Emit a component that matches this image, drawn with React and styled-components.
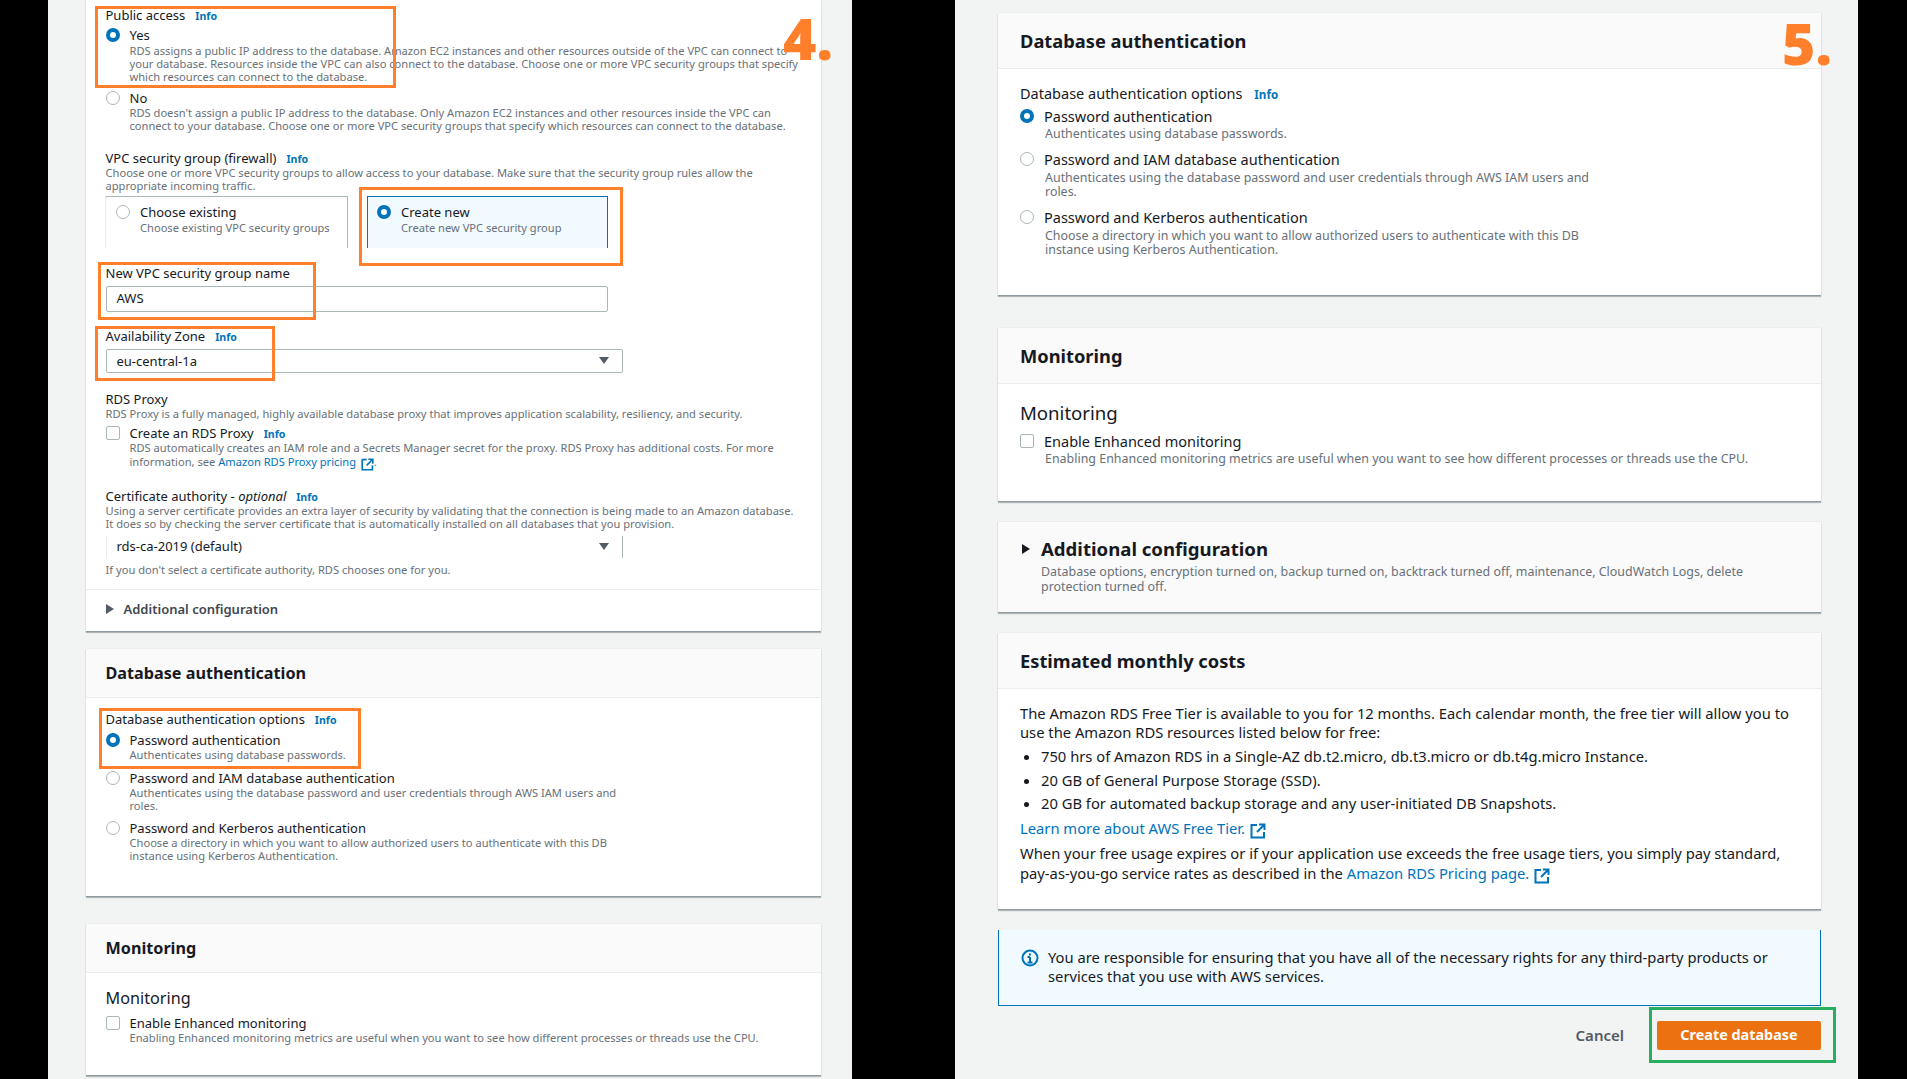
import styled, { createGlobalStyle } from "styled-components";

const GlobalStyle = createGlobalStyle`
  html, body {
    margin: 0;
    background: #000;
  }
  * {
    box-sizing: border-box;
  }
`;

const Page = styled.div`
  display: flex;
  gap: 103px;
  height: 1079px;
  width: 1907px;
  padding-left: 48px;
  overflow: hidden;
  background: #000;
  font-family: "Noto Sans", sans-serif;
  color: #16191f;
`;

const Panel = styled.section`
  position: relative;
  flex: none;
  width: ${(p) => (p.$small ? "804px" : "903px")};
  height: 1079px;
  overflow: hidden;
  background: #f2f3f3;
  padding: ${(p) => (p.$small ? "0 31px 0 38px" : "13px 37px 0 43px")};

  --label: ${(p) => (p.$small ? "13px" : "14.5px")};
  --desc: ${(p) => (p.$small ? "11.13px" : "12.45px")};
  --info: ${(p) => (p.$small ? "10.6px" : "11.6px")};
  --info-gap: ${(p) => (p.$small ? "10px" : "12px")};
  --title: ${(p) => (p.$small ? "16.2px" : "18.3px")};
  --sub: ${(p) => (p.$small ? "16.2px" : "18.6px")};
  --pad: ${(p) => (p.$small ? "19.5px" : "22px")};
  --row: ${(p) => (p.$small ? "16px" : "18px")};
`;

const Card = styled.div`
  background: #fff;
  margin-top: ${(p) => p.$mt || 0}px;
  height: ${(p) => p.$h}px;
  border-bottom: 1px solid #8d9a9f;
  box-shadow: 0 1px 1px rgba(0, 28, 36, 0.25), 0 0 1px rgba(0, 28, 36, 0.15);
`;

const CardHeader = styled.header`
  display: flex;
  align-items: center;
  height: ${(p) => p.$h}px;
  padding: 0 var(--pad) 1px;
  background: #fafafa;
  border-bottom: 1px solid #eaeded;
`;

const CardTitle = styled.h2`
  margin: 0;
  font-size: var(--title);
  font-weight: 700;
  color: #16191f;
`;

const CardBody = styled.div`
  padding: ${(p) => p.$pt || 0}px var(--pad) 0;
`;

const SubTitle = styled.h3`
  margin: 0;
  font-size: var(--sub);
  font-weight: 400;
  line-height: 24px;
`;

const FieldLabel = styled.div`
  margin-top: ${(p) => p.$mt || 0}px;
  font-size: var(--label);
  line-height: var(--row);
  white-space: nowrap;

  em {
    font-style: italic;
  }
`;

const InfoLink = styled.a`
  margin-left: var(--info-gap);
  font-size: var(--info);
  font-weight: 700;
  line-height: 1;
  color: #0073bb;
`;

const Description = styled.p`
  margin: ${(p) => p.$mt || 0}px 0 0 ${(p) => p.$ml || 0}px;
  font-size: var(--desc);
  line-height: ${(p) => p.$lh || 13}px;
  color: #687078;
  white-space: nowrap;
`;

const OptionRow = styled.div`
  display: flex;
  align-items: center;
  gap: 10px;
  margin-top: ${(p) => p.$mt || 0}px;
  font-size: var(--label);
  line-height: var(--row);
  white-space: nowrap;
`;

const Indented = styled.div`
  margin-left: ${(p) => p.$ml || 24}px;
`;

const Radio = styled.span`
  flex: none;
  width: 14px;
  height: 14px;
  border-radius: 50%;
  background: #fff;
  border: ${(p) => (p.$on ? "4px solid #0073bb" : "1px solid #aab7b8")};
`;

const Checkbox = styled.span`
  flex: none;
  width: 14px;
  height: 14px;
  border-radius: 2px;
  background: #fff;
  border: 1px solid #aab7b8;
`;

const Tiles = styled.div`
  display: flex;
  gap: 19px;
  margin: 4px 0 0 -0.5px;
`;

const Tile = styled.div`
  width: ${(p) => p.$w}px;
  height: 52px;
  padding: 7px 0 0 ${(p) => p.$pl}px;
  background: ${(p) => (p.$on ? "#f1faff" : "#fff")};
  border: 1px solid ${(p) => (p.$on ? "#0073bb" : "#aab7b8")};
  border-bottom: none;
  border-left-color: ${(p) => (p.$on ? "#0073bb" : "#eaeded")};
`;

const TextInput = styled.div`
  display: flex;
  align-items: center;
  width: 502px;
  height: 26px;
  margin-top: 5px;
  padding: 0 0 2px 10px;
  font-size: var(--label);
  background: #fff;
  border: 1px solid #aab7b8;
  border-radius: 2px;
`;

const SelectBox = styled.div`
  display: flex;
  align-items: center;
  justify-content: space-between;
  width: 517px;
  height: 24px;
  margin-top: ${(p) => p.$mt || 5}px;
  padding: 0 13px 1px 10px;
  font-size: var(--label);
  background: #fff;
  border: 1px solid #aab7b8;
  border-radius: 2px;
  ${(p) => p.$open && "border-top-color: #fff; border-left-color: #eaeded; border-bottom-color: #fff;"}
`;

const Caret = styled.span`
  width: 0;
  height: 0;
  border-left: 5px solid transparent;
  border-right: 5px solid transparent;
  border-top: 7px solid #545b64;
`;

const Divider = styled.hr`
  margin: ${(p) => p.$mt}px calc(var(--pad) * -1) 0;
  border: none;
  border-top: 1px solid #eaeded;
`;

const Expander = styled.div`
  display: flex;
  align-items: center;
  gap: 10px;
  margin-top: 11px;
  font-size: var(--label);
  font-weight: 600;
  line-height: 16px;
  color: #414750;
`;

const Triangle = styled.span`
  flex: none;
  width: 0;
  height: 0;
  border-top: 5.5px solid transparent;
  border-bottom: 5.5px solid transparent;
  border-left: 8px solid ${(p) => p.$color || "#545b64"};
`;

const ExpanderCard = styled(Card)`
  background: #fafafa;
  padding: 16px var(--pad) 0;
`;

const ExpanderTitle = styled.div`
  display: flex;
  align-items: center;
  gap: 11px;
  margin-left: 2px;
  font-size: var(--sub);
  font-weight: 700;
  line-height: 22px;
`;

const Copy = styled.p`
  margin: ${(p) => p.$mt || 0}px 0 0;
  font-size: 14.75px;
  line-height: ${(p) => p.$lh || 19}px;
  white-space: nowrap;
`;

const Bullets = styled.ul`
  margin: 5px 0 0;
  padding: 0 0 0 21px;
  font-size: 14.75px;
  line-height: 19px;

  li {
    margin-bottom: 4.5px;
  }
`;

const ExternalLink = styled.a`
  color: #0073bb;
`;

const LinkIcon = styled.svg`
  width: ${(p) => p.$size}px;
  height: ${(p) => p.$size}px;
  margin: -3px 0 -3px 5px;
  vertical-align: -2px;
`;

const Alert = styled.div`
  display: flex;
  gap: 9px;
  height: 76px;
  margin-top: 20px;
  padding: 18px 22px 0;
  background: #f1faff;
  border: 1px solid #0073bb;
  border-top: none;
`;

const AlertIcon = styled.svg`
  flex: none;
  width: 18px;
  height: 18px;
  margin-top: 1px;
`;

const Actions = styled.div`
  display: flex;
  justify-content: flex-end;
  align-items: center;
  gap: 33px;
  margin-top: 15px;
`;

const CancelButton = styled.span`
  padding-bottom: 2px;
  font-size: 15px;
  font-weight: 600;
  color: #545b64;
`;

const PrimaryButton = styled.span`
  display: flex;
  align-items: center;
  justify-content: center;
  width: 164px;
  height: 29px;
  padding-bottom: 2px;
  font-size: 14.4px;
  font-weight: 700;
  color: #fff;
  background: #ec7211;
  border-radius: 2px;
`;

const Highlight = styled.div`
  position: absolute;
  left: ${(p) => p.$x}px;
  top: ${(p) => p.$y}px;
  width: ${(p) => p.$w}px;
  height: ${(p) => p.$h}px;
  border: 3px solid ${(p) => p.$color || "#ff7f2a"};
  pointer-events: none;
`;

const StepNumber = styled.div`
  position: absolute;
  left: ${(p) => p.$x}px;
  top: ${(p) => p.$y}px;
  font-family: "Open Sans", sans-serif;
  font-size: 57px;
  font-weight: 800;
  line-height: 60px;
  color: #ff7f2a;
`;

function External({ size = 12 }) {
  return (
    <LinkIcon $size={size} viewBox="0 0 16 16" fill="none" stroke="#0073bb" strokeWidth="2">
      <path d="M7 2H1.5v12.5H14V9" />
      <path d="M9 1.5h5.5V7M14.5 1.5 7 9" />
    </LinkIcon>
  );
}

function LeftPanel() {
  return (
    <Panel $small>
      <Card $h={632}>
        <CardBody $pt={7}>
          <FieldLabel>
            Public access<InfoLink>Info</InfoLink>
          </FieldLabel>
          <OptionRow $mt={4}>
            <Radio $on />
            Yes
          </OptionRow>
          <Indented>
            <Description $mt={0.5} $lh={13}>
              RDS assigns a public IP address to the database. Amazon EC2 instances and other resources outside of the VPC can connect to
              <br />
              your database. Resources inside the VPC can also connect to the database. Choose one or more VPC security groups that specify
              <br />
              which resources can connect to the database.
            </Description>
          </Indented>
          <OptionRow $mt={7.5}>
            <Radio />
            No
          </OptionRow>
          <Indented>
            <Description>
              RDS doesn't assign a public IP address to the database. Only Amazon EC2 instances and other resources inside the VPC can
              <br />
              connect to your database. Choose one or more VPC security groups that specify which resources can connect to the database.
            </Description>
          </Indented>
          <FieldLabel $mt={18}>
            VPC security group (firewall)<InfoLink>Info</InfoLink>
          </FieldLabel>
          <Description $mt={1} $lh={12.5}>
            Choose one or more VPC security groups to allow access to your database. Make sure that the security group rules allow the
            <br />
            appropriate incoming traffic.
          </Description>
          <Tiles>
            <Tile $w={243} $pl={10}>
              <OptionRow>
                <Radio />
                Choose existing
              </OptionRow>
              <Description $mt={1} $ml={24}>
                Choose existing VPC security groups
              </Description>
            </Tile>
            <Tile $on $w={241} $pl={9}>
              <OptionRow>
                <Radio $on />
                Create new
              </OptionRow>
              <Description $mt={1} $ml={24}>
                Create new VPC security group
              </Description>
            </Tile>
          </Tiles>
          <FieldLabel $mt={17}>New VPC security group name</FieldLabel>
          <TextInput>AWS</TextInput>
          <FieldLabel $mt={16}>
            Availability Zone<InfoLink>Info</InfoLink>
          </FieldLabel>
          <SelectBox>
            eu-central-1a
            <Caret />
          </SelectBox>
          <FieldLabel $mt={18}>RDS Proxy</FieldLabel>
          <Description $mt={1} $lh={12.5}>
            RDS Proxy is a fully managed, highly available database proxy that improves application scalability, resiliency, and security.
          </Description>
          <OptionRow $mt={4.5}>
            <Checkbox />
            <span>
              Create an RDS Proxy<InfoLink>Info</InfoLink>
            </span>
          </OptionRow>
          <Indented>
            <Description $lh={13.5}>
              RDS automatically creates an IAM role and a Secrets Manager secret for the proxy. RDS Proxy has additional costs. For more
              <br />
              information, see <ExternalLink>Amazon RDS Proxy pricing</ExternalLink>
              <External size={13} />.
            </Description>
          </Indented>
          <FieldLabel $mt={19.5}>
            Certificate authority - <em>optional</em>
            <InfoLink>Info</InfoLink>
          </FieldLabel>
          <Description>
            Using a server certificate provides an extra layer of security by validating that the connection is being made to an Amazon database.
            <br />
            It does so by checking the server certificate that is automatically installed on all databases that you provision.
          </Description>
          <SelectBox $open $mt={5}>
            rds-ca-2019 (default)
            <Caret />
          </SelectBox>
          <Description $mt={4.5}>If you don't select a certificate authority, RDS chooses one for you.</Description>
          <Divider $mt={12.5} />
          <Expander>
            <Triangle />
            Additional configuration
          </Expander>
        </CardBody>
      </Card>

      <Card $mt={17} $h={248}>
        <CardHeader $h={49}>
          <CardTitle>Database authentication</CardTitle>
        </CardHeader>
        <CardBody $pt={13}>
          <FieldLabel>
            Database authentication options<InfoLink>Info</InfoLink>
          </FieldLabel>
          <OptionRow $mt={5}>
            <Radio $on />
            Password authentication
          </OptionRow>
          <Indented>
            <Description>Authenticates using database passwords.</Description>
          </Indented>
          <OptionRow $mt={8.5}>
            <Radio />
            Password and IAM database authentication
          </OptionRow>
          <Indented>
            <Description>
              Authenticates using the database password and user credentials through AWS IAM users and
              <br />
              roles.
            </Description>
          </Indented>
          <OptionRow $mt={8.5}>
            <Radio />
            Password and Kerberos authentication
          </OptionRow>
          <Indented>
            <Description>
              Choose a directory in which you want to allow authorized users to authenticate with this DB
              <br />
              instance using Kerberos Authentication.
            </Description>
          </Indented>
        </CardBody>
      </Card>

      <Card $mt={27} $h={152}>
        <CardHeader $h={49}>
          <CardTitle>Monitoring</CardTitle>
        </CardHeader>
        <CardBody $pt={13}>
          <SubTitle>Monitoring</SubTitle>
          <OptionRow $mt={5}>
            <Checkbox />
            Enable Enhanced monitoring
          </OptionRow>
          <Indented>
            <Description>Enabling Enhanced monitoring metrics are useful when you want to see how different processes or threads use the CPU.</Description>
          </Indented>
        </CardBody>
      </Card>

      <Highlight $x={47} $y={6} $w={301} $h={82} />
      <Highlight $x={311} $y={187} $w={264} $h={79} />
      <Highlight $x={50} $y={262} $w={218} $h={58} />
      <Highlight $x={47} $y={326} $w={180} $h={55} />
      <Highlight $x={51} $y={708} $w={262} $h={61} />
      <StepNumber $x={735} $y={8}>4.</StepNumber>
    </Panel>
  );
}

function RightPanel() {
  return (
    <Panel>
      <Card $h={283}>
        <CardHeader $h={56}>
          <CardTitle>Database authentication</CardTitle>
        </CardHeader>
        <CardBody $pt={15}>
          <FieldLabel>
            Database authentication options<InfoLink>Info</InfoLink>
          </FieldLabel>
          <OptionRow $mt={5}>
            <Radio $on />
            Password authentication
          </OptionRow>
          <Indented $ml={25}>
            <Description $mt={2} $lh={14}>Authenticates using database passwords.</Description>
          </Indented>
          <OptionRow $mt={9}>
            <Radio />
            Password and IAM database authentication
          </OptionRow>
          <Indented $ml={25}>
            <Description $mt={2.5} $lh={14.5}>
              Authenticates using the database password and user credentials through AWS IAM users and
              <br />
              roles.
            </Description>
          </Indented>
          <OptionRow $mt={8.5}>
            <Radio />
            Password and Kerberos authentication
          </OptionRow>
          <Indented $ml={25}>
            <Description $mt={2.5} $lh={14.5}>
              Choose a directory in which you want to allow authorized users to authenticate with this DB
              <br />
              instance using Kerberos Authentication.
            </Description>
          </Indented>
        </CardBody>
      </Card>

      <Card $mt={32} $h={174}>
        <CardHeader $h={56}>
          <CardTitle>Monitoring</CardTitle>
        </CardHeader>
        <CardBody $pt={17}>
          <SubTitle>Monitoring</SubTitle>
          <OptionRow $mt={7}>
            <Checkbox />
            Enable Enhanced monitoring
          </OptionRow>
          <Indented $ml={25}>
            <Description $mt={2} $lh={14}>
              Enabling Enhanced monitoring metrics are useful when you want to see how different processes or threads use the CPU.
            </Description>
          </Indented>
        </CardBody>
      </Card>

      <ExpanderCard $mt={20} $h={91}>
        <ExpanderTitle>
          <Triangle $color="#16191f" />
          Additional configuration
        </ExpanderTitle>
        <Indented $ml={21}>
          <Description $mt={3.5} $lh={15}>
            Database options, encryption turned on, backup turned on, backtrack turned off, maintenance, CloudWatch Logs, delete
            <br />
            protection turned off.
          </Description>
        </Indented>
      </ExpanderCard>

      <Card $mt={20} $h={277}>
        <CardHeader $h={56}>
          <CardTitle>Estimated monthly costs</CardTitle>
        </CardHeader>
        <CardBody $pt={15}>
          <Copy>
            The Amazon RDS Free Tier is available to you for 12 months. Each calendar month, the free tier will allow you to
            <br />
            use the Amazon RDS resources listed below for free:
          </Copy>
          <Bullets>
            <li>750 hrs of Amazon RDS in a Single-AZ db.t2.micro, db.t3.micro or db.t4g.micro Instance.</li>
            <li>20 GB of General Purpose Storage (SSD).</li>
            <li>20 GB for automated backup storage and any user-initiated DB Snapshots.</li>
          </Bullets>
          <Copy $mt={6}>
            <ExternalLink>Learn more about AWS Free Tier.</ExternalLink>
            <External size={16} />
          </Copy>
          <Copy $mt={5} $lh={20}>
            When your free usage expires or if your application use exceeds the free usage tiers, you simply pay standard,
            <br />
            pay-as-you-go service rates as described in the <ExternalLink>Amazon RDS Pricing page.</ExternalLink>
            <External size={16} />
          </Copy>
        </CardBody>
      </Card>

      <Alert>
        <AlertIcon viewBox="0 0 18 18" fill="none" stroke="#0073bb" strokeWidth="2">
          <circle cx="9" cy="9" r="7.5" />
          <path d="M9 8v5.5M6.5 8H9M6.5 13.5h5M9 4.5v2" />
        </AlertIcon>
        <Copy>
          You are responsible for ensuring that you have all of the necessary rights for any third-party products or
          <br />
          services that you use with AWS services.
        </Copy>
      </Alert>

      <Actions>
        <CancelButton>Cancel</CancelButton>
        <PrimaryButton>Create database</PrimaryButton>
      </Actions>

      <Highlight $x={694} $y={1007} $w={187} $h={56} $color="#27ae60" />
      <StepNumber $x={827} $y={13}>5.</StepNumber>
    </Panel>
  );
}

export default function App() {
  return (
    <>
      <GlobalStyle />
      <Page>
        <LeftPanel />
        <RightPanel />
      </Page>
    </>
  );
}
